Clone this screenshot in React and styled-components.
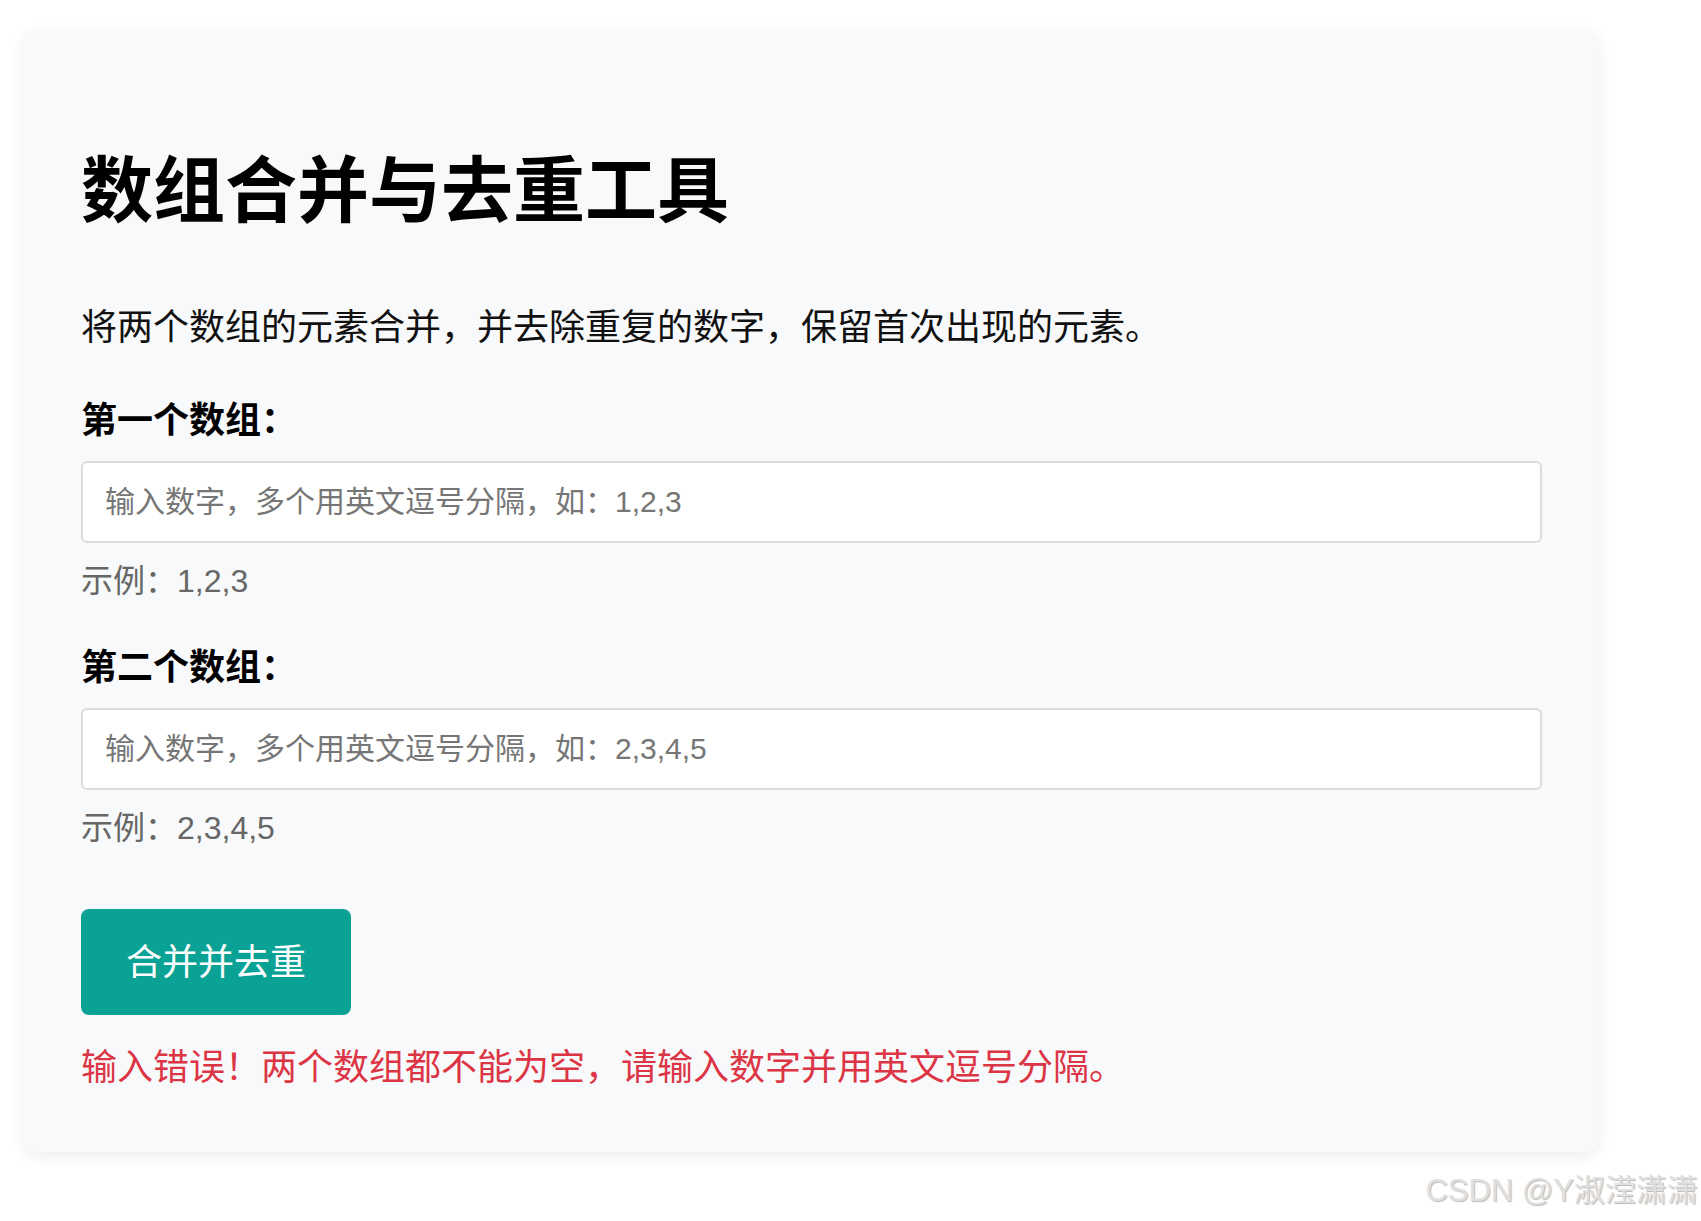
import React from "react";
import styled, { createGlobalStyle } from "styled-components";

const GlobalStyle = createGlobalStyle`
  html, body {
    margin: 0;
    padding: 0;
    background: #ffffff;
  }
  body {
    font-family: "Liberation Sans", "Noto Sans CJK SC", sans-serif;
    color: #000;
  }
  * { box-sizing: border-box; }
`;

const Page = styled.div`
  position: relative;
  width: 1701px;
  height: 1221px;
  padding: 30px 0 0 23px;
  overflow: hidden;
`;

const Card = styled.div`
  width: 1576px;
  background: #f8f9fa;
  border-radius: 15px;
  box-shadow: 0 4px 16px rgba(0, 0, 0, 0.07);
  padding: 60px 57px 63px 58px;
  display: flex;
  flex-direction: column;
  align-items: flex-start;
`;

const Title = styled.h1`
  margin: 58px 0 0;
  font-size: 72px;
  line-height: 86px;
  font-weight: 700;
  color: #000;
`;

const Description = styled.p`
  margin: 72px 0 0;
  font-size: 36px;
  line-height: 43px;
  color: #111;
`;

const Field = styled.div`
  margin-top: ${(p) => p.$top}px;
  width: 100%;
  display: flex;
  flex-direction: column;
`;

const Label = styled.label`
  font-size: 36px;
  line-height: 43px;
  font-weight: 700;
  color: #000;
`;

const Input = styled.input`
  margin-top: 19px;
  width: 1461px;
  height: 82px;
  padding: 0 22px;
  border: 2px solid #dcdcdc;
  border-radius: 6px;
  background: #fff;
  font-family: "Liberation Sans", "Noto Sans CJK SC", sans-serif;
  font-size: 30px;
  color: #333;
  outline: none;
  &::placeholder {
    color: #767676;
  }
`;

const Hint = styled.div`
  margin-top: 19px;
  font-size: 32px;
  line-height: 38px;
  color: #666;
`;

const Button = styled.button`
  margin-top: 62px;
  height: 106px;
  padding: 0 45px;
  border: none;
  border-radius: 8px;
  background: #0aa294;
  color: #fff;
  font-family: "Liberation Sans", "Noto Sans CJK SC", sans-serif;
  font-size: 36px;
  line-height: 43px;
  cursor: pointer;
`;

const ErrorText = styled.div`
  margin-top: 31px;
  font-size: 36px;
  line-height: 43px;
  color: #dc3545;
`;

const Watermark = styled.div`
  position: absolute;
  right: 3px;
  top: 1173px;
  font-size: 31px;
  line-height: 36px;
  color: #e0e0e0;
  text-shadow: 1px 1px 1px rgba(0, 0, 0, 0.28);
  white-space: nowrap;
`;

export default function App() {
  return (
    <>
      <GlobalStyle />
      <Page>
        <Card>
          <Title>数组合并与去重工具</Title>
          <Description>将两个数组的元素合并，并去除重复的数字，保留首次出现的元素。</Description>
          <Field $top={50}>
            <Label>第一个数组：</Label>
            <Input placeholder="输入数字，多个用英文逗号分隔，如：1,2,3" />
            <Hint>示例：1,2,3</Hint>
          </Field>
          <Field $top={46}>
            <Label>第二个数组：</Label>
            <Input placeholder="输入数字，多个用英文逗号分隔，如：2,3,4,5" />
            <Hint>示例：2,3,4,5</Hint>
          </Field>
          <Button>合并并去重</Button>
          <ErrorText>输入错误！两个数组都不能为空，请输入数字并用英文逗号分隔。</ErrorText>
        </Card>
        <Watermark>CSDN @Y淑滢潇潇</Watermark>
      </Page>
    </>
  );
}
